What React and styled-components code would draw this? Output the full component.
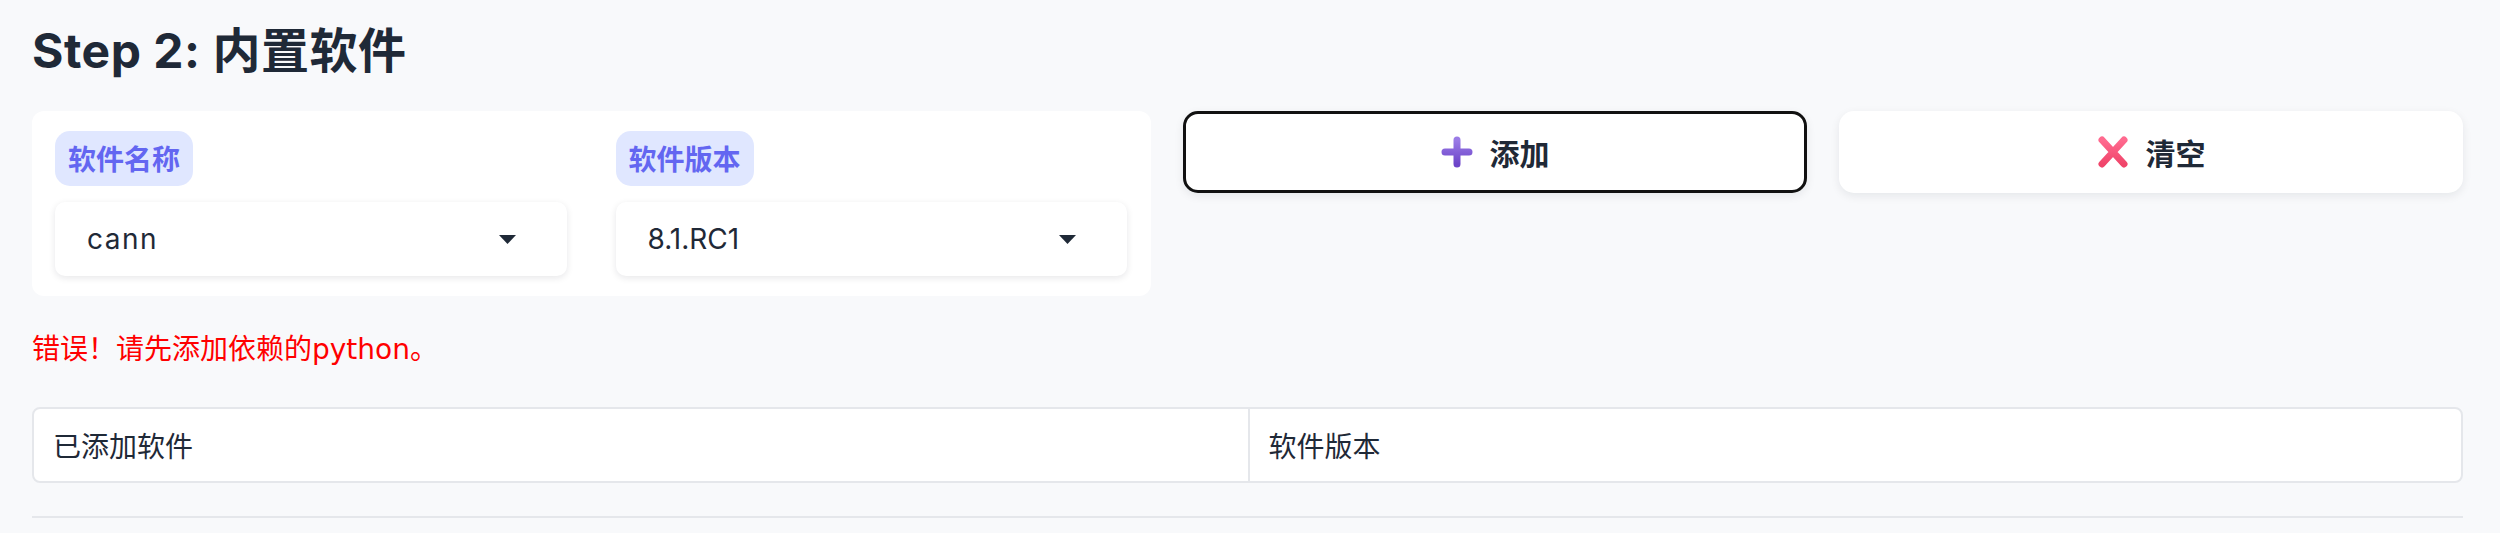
import React, { useState } from "react";
import styled, { createGlobalStyle } from "styled-components";

const GlobalStyle = createGlobalStyle`
  html, body {
    margin: 0;
    padding: 0;
    background: #f8f9fb;
  }
  body {
    font-family: Inter, "Noto Sans CJK SC", sans-serif;
    color: #1f2937;
  }
`;

const Page = styled.div`
  padding: 21px 37px 40px 32px;
`;

const Title = styled.h2`
  margin: 0;
  font-size: 48px;
  line-height: 60px;
  font-weight: 700;
  letter-spacing: 0.5px;
  color: #1f2937;
  font-family: Inter, "Noto Sans CJK SC", sans-serif;
`;

const Toolbar = styled.div`
  display: grid;
  grid-template-columns: 1119px 1fr 1fr;
  column-gap: 32px;
  align-items: start;
  margin-top: 30px;
`;

const Panel = styled.div`
  background: #fff;
  border-radius: 12px;
  padding: 20px 24px 20px 23px;
  display: grid;
  grid-template-columns: 1fr 1fr;
  column-gap: 49px;
`;

const Field = styled.div`
  display: flex;
  flex-direction: column;
  align-items: flex-start;
  gap: 16px;
`;

const Chip = styled.span`
  display: inline-block;
  height: 55px;
  line-height: 55px;
  padding: 0 13px;
  border-radius: 15px;
  background: #e0e7ff;
  color: #6366f1;
  font-size: 28px;
  font-weight: 700;
  font-family: "Noto Sans CJK SC", sans-serif;
`;

const Select = styled.div`
  align-self: stretch;
  height: 74px;
  box-sizing: border-box;
  background: #fff;
  border-radius: 10px;
  box-shadow: 0 2px 7px rgba(15, 23, 42, 0.1);
  display: flex;
  align-items: center;
  justify-content: space-between;
  padding: 0 51px 0 32px;
  font-size: 28px;
  letter-spacing: ${({ $spread }) => ($spread ? "1.5px" : "0")};
  color: #1f2937;
  font-family: Inter, sans-serif;
  font-weight: 400;
  cursor: pointer;
`;

const Button = styled.button`
  height: 82px;
  box-sizing: border-box;
  background: #fff;
  border: ${({ $focused }) => ($focused ? "3.5px solid #111" : "0")};
  border-radius: 15px;
  box-shadow: 0 3px 10px rgba(15, 23, 42, 0.08);
  display: flex;
  align-items: center;
  justify-content: center;
  gap: 17px;
  font-size: 30px;
  font-weight: 700;
  color: #1f2937;
  font-family: "Noto Sans CJK SC", sans-serif;
  cursor: pointer;
`;

const ErrorText = styled.div`
  margin-top: 34px;
  line-height: 40px;
  font-size: 28px;
  color: #ff0000;
  font-family: "DejaVu Sans", "Noto Sans CJK SC", sans-serif;
  font-weight: 400;
`;

const Table = styled.div`
  margin-top: 37px;
  display: grid;
  grid-template-columns: 1fr 1fr;
  background: #fff;
  border: 2px solid #e5e7eb;
  border-radius: 8px;
  overflow: hidden;
`;

const HeadCell = styled.div`
  height: 72px;
  display: flex;
  align-items: center;
  padding-left: 19px;
  font-size: 28px;
  font-family: "Liberation Serif", "Noto Sans CJK SC", serif;
  color: #1f2937;
  border-left: ${({ $first }) => ($first ? "0" : "2px solid #e5e7eb")};
`;

const Divider = styled.hr`
  margin: 33px 0 0;
  border: 0;
  border-top: 2px solid #e5e7eb;
`;

const Caret = () => (
  <svg width="17" height="9" viewBox="0 0 17 9">
    <path d="M0 0 H17 L8.5 9 Z" fill="#1f2937" />
  </svg>
);

const PlusIcon = () => (
  <svg width="32" height="32" viewBox="0 0 32 32">
    <defs>
      <linearGradient id="plusGrad" x1="0" y1="0" x2="0" y2="1">
        <stop offset="0" stopColor="#9a7be6" />
        <stop offset="1" stopColor="#6d45c9" />
      </linearGradient>
    </defs>
    <path
      d="M16 4 V28 M4 16 H28"
      stroke="url(#plusGrad)"
      strokeWidth="7"
      strokeLinecap="round"
    />
  </svg>
);

const CrossIcon = () => (
  <svg width="32" height="32" viewBox="0 0 32 32">
    <defs>
      <linearGradient id="crossGrad" x1="0" y1="0" x2="0" y2="1">
        <stop offset="0" stopColor="#ff6a8f" />
        <stop offset="1" stopColor="#f0456a" />
      </linearGradient>
    </defs>
    <path
      d="M5 4 L27 28 M27 4 L5 28"
      stroke="url(#crossGrad)"
      strokeWidth="7"
      strokeLinecap="round"
    />
  </svg>
);

export default function App() {
  const [name] = useState("cann");
  const [version] = useState("8.1.RC1");

  return (
    <Page>
      <GlobalStyle />
      <Title>Step 2: 内置软件</Title>
      <Toolbar>
        <Panel>
          <Field>
            <Chip>软件名称</Chip>
            <Select $spread>
              <span>{name}</span>
              <Caret />
            </Select>
          </Field>
          <Field>
            <Chip>软件版本</Chip>
            <Select>
              <span>{version}</span>
              <Caret />
            </Select>
          </Field>
        </Panel>
        <Button $focused>
          <PlusIcon />
          添加
        </Button>
        <Button>
          <CrossIcon />
          清空
        </Button>
      </Toolbar>
      <ErrorText>错误！请先添加依赖的python。</ErrorText>
      <Table>
        <HeadCell $first>已添加软件</HeadCell>
        <HeadCell>软件版本</HeadCell>
      </Table>
      <Divider />
    </Page>
  );
}
